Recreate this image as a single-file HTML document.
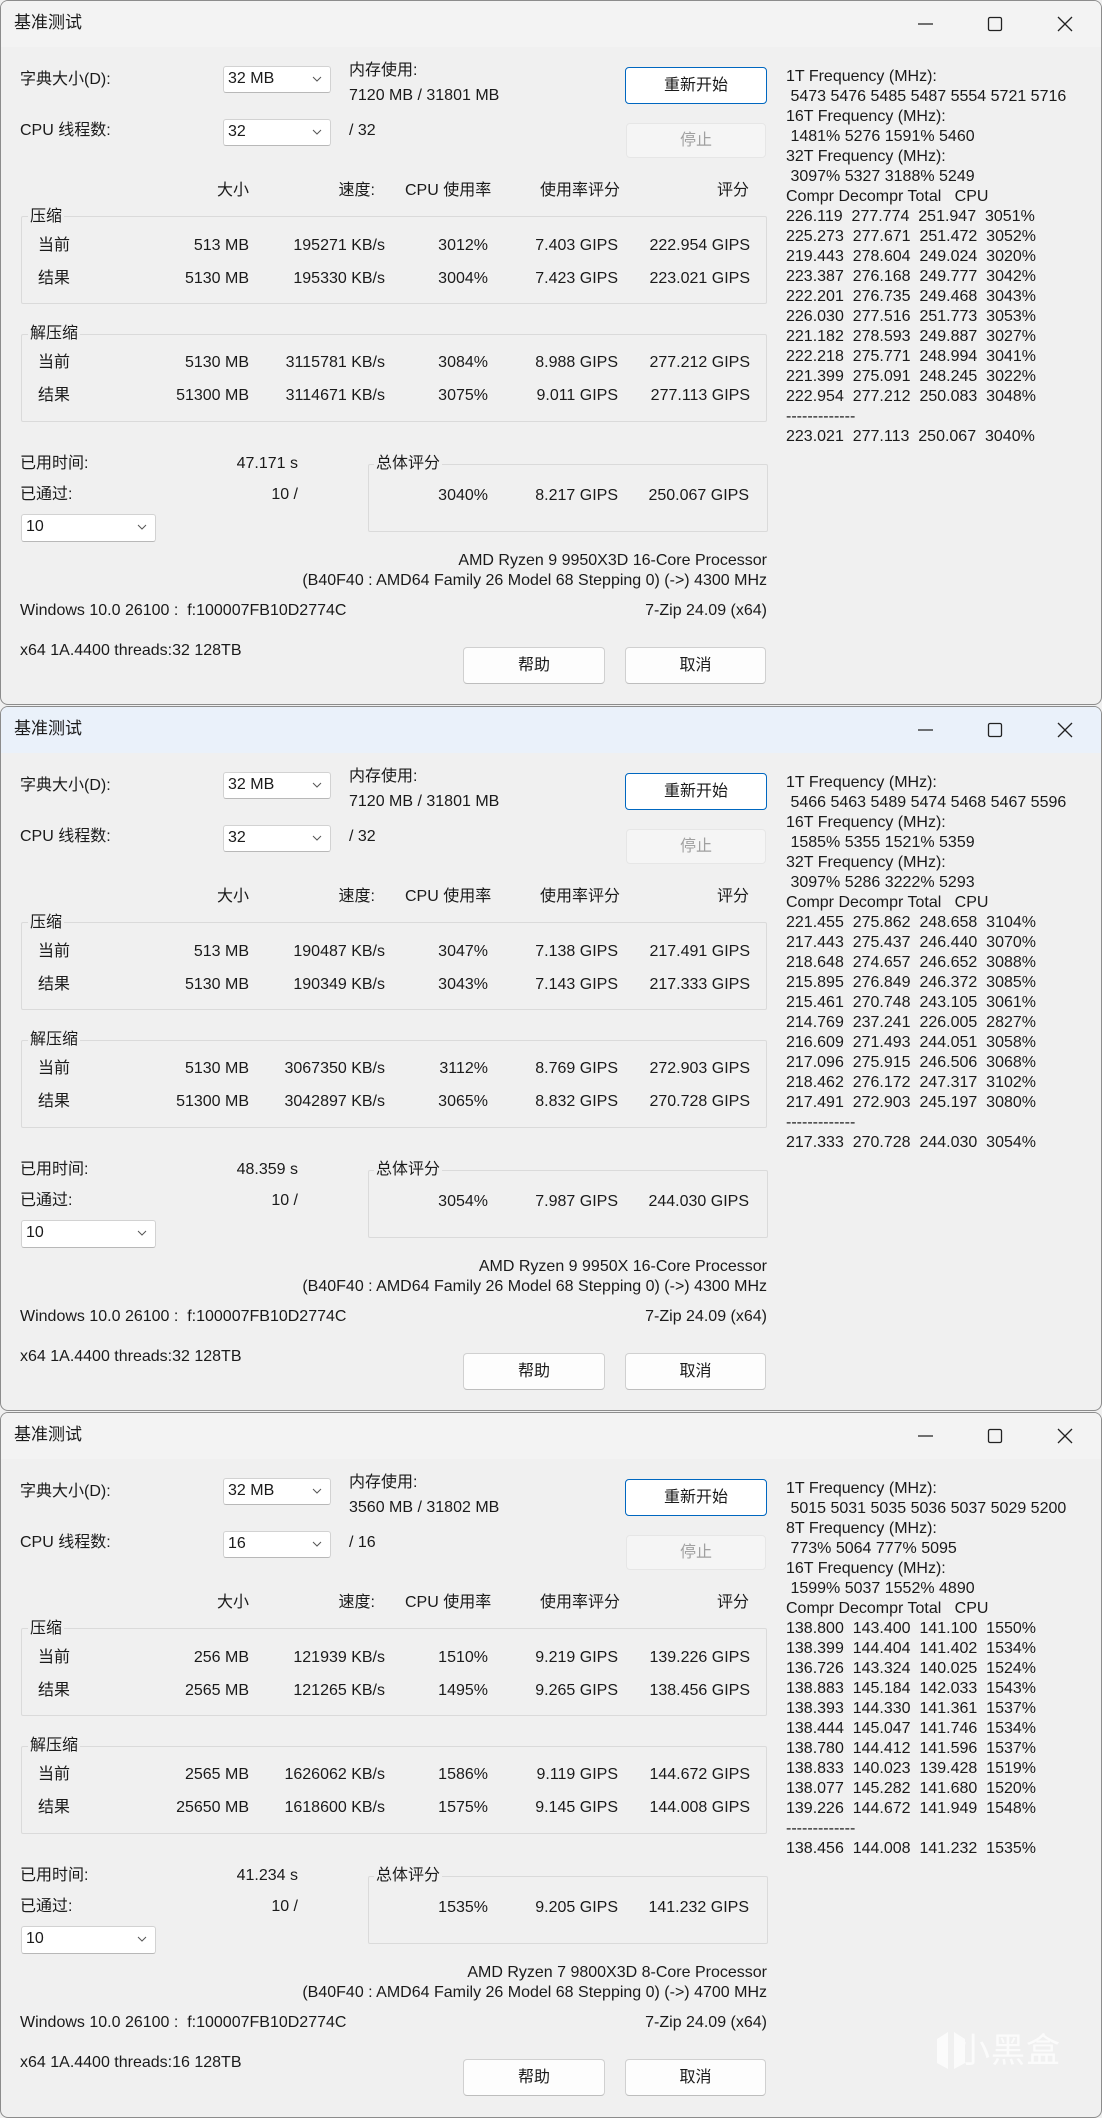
<!DOCTYPE html>
<html><head><meta charset="utf-8"><style>
*{margin:0;padding:0;box-sizing:border-box}
body{width:1102px;height:2118px;background:#f0f0f0;position:relative;overflow:hidden;font-family:"Liberation Sans","Noto Sans CJK SC",sans-serif;color:#1a1a1a}
.w{position:absolute;left:0;width:1102px;height:705px;border:1px solid #8c8c8c;border-radius:8px;background:#f0f0f0;overflow:hidden}
.tb{position:absolute;left:0;top:0;width:100%;height:46px;background:#f3f3f3}
.blue .tb{background:#eaf1fa}
.t{position:absolute;white-space:pre;line-height:20px;font-size:16px}
.r{text-align:right}
.ttl{left:13px;top:12px;font-size:17px}
.cb{position:absolute;background:#fff;border:1px solid #d2d2d2;border-bottom-color:#b8b8b8;border-radius:3px;font-size:16px;line-height:24px;padding-left:4px}
.cb svg{position:absolute;right:8px;top:9px}
.gb{position:absolute;border:1px solid #dadada;border-radius:2px}
.gl{position:absolute;background:#f0f0f0;padding:0 2px;line-height:20px;font-size:16px}
.btn{position:absolute;background:#fdfdfd;border:1px solid #d0d0d0;border-bottom-color:#bdbdbd;border-radius:4px;text-align:center;font-size:16px}
.pri{border:1px solid #0067c0;background:#fff}
.dis{background:#f5f5f5;border-color:#e6e6e6;color:#a0a0a0}
.rc{left:785px;top:66px;line-height:20px;font-size:16px}
.wm{position:absolute;left:955px;top:610px;font-size:34px;color:#fbfbfb;font-family:"Noto Sans CJK SC",sans-serif;letter-spacing:1px}
</style></head><body>

<!-- WINDOW 1 -->
<div class="w" style="top:0">
<div class="tb"></div>
<div class="t ttl">基准测试</div>
<svg style="position:absolute;left:916px;top:14px" width="160" height="18"><line x1="1" y1="9" x2="16" y2="9" stroke="#222" stroke-width="1.3"/><rect x="71.5" y="2.5" width="13" height="13" rx="1.5" fill="none" stroke="#222" stroke-width="1.3"/><path d="M141 2 L155 16 M155 2 L141 16" stroke="#222" stroke-width="1.3"/></svg>
<div class="t" style="left:19px;top:69px">字典大小(D):</div>
<div class="cb" style="left:222px;top:65px;width:108px;height:27px">32 MB<svg width="10" height="7"><path d="M1 1 L5 5 L9 1" fill="none" stroke="#555" stroke-width="1"/></svg></div>
<div class="t" style="left:348px;top:60px">内存使用:</div>
<div class="t" style="left:348px;top:85px">7120 MB / 31801 MB</div>
<div class="btn pri" style="left:624px;top:66px;width:142px;height:37px;line-height:35px">重新开始</div>
<div class="btn dis" style="left:625px;top:122px;width:140px;height:35px;line-height:33px">停止</div>
<div class="t" style="left:19px;top:120px">CPU 线程数:</div>
<div class="cb" style="left:222px;top:118px;width:108px;height:27px">32<svg width="10" height="7"><path d="M1 1 L5 5 L9 1" fill="none" stroke="#555" stroke-width="1"/></svg></div>
<div class="t" style="left:348px;top:120px">/ 32</div>
<div class="t r" style="right:852px;top:180px">大小</div>
<div class="t r" style="right:726px;top:180px">速度:</div>
<div class="t" style="left:404px;top:180px">CPU 使用率</div>
<div class="t" style="left:539px;top:180px">使用率评分</div>
<div class="t r" style="right:352px;top:180px">评分</div>
<div class="gb" style="left:20px;top:215px;width:746px;height:88px"></div>
<div class="gl" style="left:27px;top:206px">压缩</div>
<div class="t" style="left:37px;top:235px">当前</div><div class="t r" style="right:852px;top:235px">513 MB</div><div class="t r" style="right:716px;top:235px">195271 KB/s</div><div class="t r" style="right:613px;top:235px">3012%</div><div class="t r" style="right:483px;top:235px">7.403 GIPS</div><div class="t r" style="right:351px;top:235px">222.954 GIPS</div>
<div class="t" style="left:37px;top:268px">结果</div><div class="t r" style="right:852px;top:268px">5130 MB</div><div class="t r" style="right:716px;top:268px">195330 KB/s</div><div class="t r" style="right:613px;top:268px">3004%</div><div class="t r" style="right:483px;top:268px">7.423 GIPS</div><div class="t r" style="right:351px;top:268px">223.021 GIPS</div>
<div class="gb" style="left:20px;top:333px;width:746px;height:88px"></div>
<div class="gl" style="left:27px;top:323px">解压缩</div>
<div class="t" style="left:37px;top:352px">当前</div><div class="t r" style="right:852px;top:352px">5130 MB</div><div class="t r" style="right:716px;top:352px">3115781 KB/s</div><div class="t r" style="right:613px;top:352px">3084%</div><div class="t r" style="right:483px;top:352px">8.988 GIPS</div><div class="t r" style="right:351px;top:352px">277.212 GIPS</div>
<div class="t" style="left:37px;top:385px">结果</div><div class="t r" style="right:852px;top:385px">51300 MB</div><div class="t r" style="right:716px;top:385px">3114671 KB/s</div><div class="t r" style="right:613px;top:385px">3075%</div><div class="t r" style="right:483px;top:385px">9.011 GIPS</div><div class="t r" style="right:351px;top:385px">277.113 GIPS</div>
<div class="t" style="left:19px;top:453px">已用时间:</div><div class="t r" style="right:803px;top:453px">47.171 s</div>
<div class="t" style="left:19px;top:484px">已通过:</div><div class="t r" style="right:803px;top:484px">10 /</div>
<div class="cb" style="left:20px;top:513px;width:135px;height:28px">10<svg width="10" height="7"><path d="M1 1 L5 5 L9 1" fill="none" stroke="#555" stroke-width="1"/></svg></div>
<div class="gb" style="left:367px;top:463px;width:400px;height:68px"></div>
<div class="gl" style="left:373px;top:453px">总体评分</div>
<div class="t r" style="right:613px;top:485px">3040%</div><div class="t r" style="right:483px;top:485px">8.217 GIPS</div><div class="t r" style="right:352px;top:485px">250.067 GIPS</div>
<div class="t r" style="right:334px;top:550px">AMD Ryzen 9 9950X3D 16-Core Processor</div>
<div class="t r" style="right:334px;top:570px">(B40F40 : AMD64 Family 26 Model 68 Stepping 0) (-&gt;) 4300 MHz</div>
<div class="t" style="left:19px;top:600px">Windows 10.0 26100 :  f:100007FB10D2774C</div>
<div class="t r" style="right:334px;top:600px">7-Zip 24.09 (x64)</div>
<div class="t" style="left:19px;top:640px">x64 1A.4400 threads:32 128TB</div>
<div class="btn" style="left:462px;top:646px;width:142px;height:37px;line-height:35px">帮助</div>
<div class="btn" style="left:624px;top:646px;width:141px;height:37px;line-height:35px">取消</div>
<div class="t rc">1T Frequency (MHz):
 5473 5476 5485 5487 5554 5721 5716
16T Frequency (MHz):
 1481% 5276 1591% 5460
32T Frequency (MHz):
 3097% 5327 3188% 5249
Compr Decompr Total   CPU
226.119  277.774  251.947  3051%
225.273  277.671  251.472  3052%
219.443  278.604  249.024  3020%
223.387  276.168  249.777  3042%
222.201  276.735  249.468  3043%
226.030  277.516  251.773  3053%
221.182  278.593  249.887  3027%
222.218  275.771  248.994  3041%
221.399  275.091  248.245  3022%
222.954  277.212  250.083  3048%
-------------
223.021  277.113  250.067  3040%</div>
</div>

<!-- WINDOW 2 -->
<div class="w blue" style="top:706px">
<div class="tb"></div>
<div class="t ttl">基准测试</div>
<svg style="position:absolute;left:916px;top:14px" width="160" height="18"><line x1="1" y1="9" x2="16" y2="9" stroke="#222" stroke-width="1.3"/><rect x="71.5" y="2.5" width="13" height="13" rx="1.5" fill="none" stroke="#222" stroke-width="1.3"/><path d="M141 2 L155 16 M155 2 L141 16" stroke="#222" stroke-width="1.3"/></svg>
<div class="t" style="left:19px;top:69px">字典大小(D):</div>
<div class="cb" style="left:222px;top:65px;width:108px;height:27px">32 MB<svg width="10" height="7"><path d="M1 1 L5 5 L9 1" fill="none" stroke="#555" stroke-width="1"/></svg></div>
<div class="t" style="left:348px;top:60px">内存使用:</div>
<div class="t" style="left:348px;top:85px">7120 MB / 31801 MB</div>
<div class="btn pri" style="left:624px;top:66px;width:142px;height:37px;line-height:35px">重新开始</div>
<div class="btn dis" style="left:625px;top:122px;width:140px;height:35px;line-height:33px">停止</div>
<div class="t" style="left:19px;top:120px">CPU 线程数:</div>
<div class="cb" style="left:222px;top:118px;width:108px;height:27px">32<svg width="10" height="7"><path d="M1 1 L5 5 L9 1" fill="none" stroke="#555" stroke-width="1"/></svg></div>
<div class="t" style="left:348px;top:120px">/ 32</div>
<div class="t r" style="right:852px;top:180px">大小</div>
<div class="t r" style="right:726px;top:180px">速度:</div>
<div class="t" style="left:404px;top:180px">CPU 使用率</div>
<div class="t" style="left:539px;top:180px">使用率评分</div>
<div class="t r" style="right:352px;top:180px">评分</div>
<div class="gb" style="left:20px;top:215px;width:746px;height:88px"></div>
<div class="gl" style="left:27px;top:206px">压缩</div>
<div class="t" style="left:37px;top:235px">当前</div><div class="t r" style="right:852px;top:235px">513 MB</div><div class="t r" style="right:716px;top:235px">190487 KB/s</div><div class="t r" style="right:613px;top:235px">3047%</div><div class="t r" style="right:483px;top:235px">7.138 GIPS</div><div class="t r" style="right:351px;top:235px">217.491 GIPS</div>
<div class="t" style="left:37px;top:268px">结果</div><div class="t r" style="right:852px;top:268px">5130 MB</div><div class="t r" style="right:716px;top:268px">190349 KB/s</div><div class="t r" style="right:613px;top:268px">3043%</div><div class="t r" style="right:483px;top:268px">7.143 GIPS</div><div class="t r" style="right:351px;top:268px">217.333 GIPS</div>
<div class="gb" style="left:20px;top:333px;width:746px;height:88px"></div>
<div class="gl" style="left:27px;top:323px">解压缩</div>
<div class="t" style="left:37px;top:352px">当前</div><div class="t r" style="right:852px;top:352px">5130 MB</div><div class="t r" style="right:716px;top:352px">3067350 KB/s</div><div class="t r" style="right:613px;top:352px">3112%</div><div class="t r" style="right:483px;top:352px">8.769 GIPS</div><div class="t r" style="right:351px;top:352px">272.903 GIPS</div>
<div class="t" style="left:37px;top:385px">结果</div><div class="t r" style="right:852px;top:385px">51300 MB</div><div class="t r" style="right:716px;top:385px">3042897 KB/s</div><div class="t r" style="right:613px;top:385px">3065%</div><div class="t r" style="right:483px;top:385px">8.832 GIPS</div><div class="t r" style="right:351px;top:385px">270.728 GIPS</div>
<div class="t" style="left:19px;top:453px">已用时间:</div><div class="t r" style="right:803px;top:453px">48.359 s</div>
<div class="t" style="left:19px;top:484px">已通过:</div><div class="t r" style="right:803px;top:484px">10 /</div>
<div class="cb" style="left:20px;top:513px;width:135px;height:28px">10<svg width="10" height="7"><path d="M1 1 L5 5 L9 1" fill="none" stroke="#555" stroke-width="1"/></svg></div>
<div class="gb" style="left:367px;top:463px;width:400px;height:68px"></div>
<div class="gl" style="left:373px;top:453px">总体评分</div>
<div class="t r" style="right:613px;top:485px">3054%</div><div class="t r" style="right:483px;top:485px">7.987 GIPS</div><div class="t r" style="right:352px;top:485px">244.030 GIPS</div>
<div class="t r" style="right:334px;top:550px">AMD Ryzen 9 9950X 16-Core Processor</div>
<div class="t r" style="right:334px;top:570px">(B40F40 : AMD64 Family 26 Model 68 Stepping 0) (-&gt;) 4300 MHz</div>
<div class="t" style="left:19px;top:600px">Windows 10.0 26100 :  f:100007FB10D2774C</div>
<div class="t r" style="right:334px;top:600px">7-Zip 24.09 (x64)</div>
<div class="t" style="left:19px;top:640px">x64 1A.4400 threads:32 128TB</div>
<div class="btn" style="left:462px;top:646px;width:142px;height:37px;line-height:35px">帮助</div>
<div class="btn" style="left:624px;top:646px;width:141px;height:37px;line-height:35px">取消</div>
<div class="t rc">1T Frequency (MHz):
 5466 5463 5489 5474 5468 5467 5596
16T Frequency (MHz):
 1585% 5355 1521% 5359
32T Frequency (MHz):
 3097% 5286 3222% 5293
Compr Decompr Total   CPU
221.455  275.862  248.658  3104%
217.443  275.437  246.440  3070%
218.648  274.657  246.652  3088%
215.895  276.849  246.372  3085%
215.461  270.748  243.105  3061%
214.769  237.241  226.005  2827%
216.609  271.493  244.051  3058%
217.096  275.915  246.506  3068%
218.462  276.172  247.317  3102%
217.491  272.903  245.197  3080%
-------------
217.333  270.728  244.030  3054%</div>
</div>

<!-- WINDOW 3 -->
<div class="w" style="top:1412px;height:706px">
<div class="tb"></div>
<div class="t ttl">基准测试</div>
<svg style="position:absolute;left:916px;top:14px" width="160" height="18"><line x1="1" y1="9" x2="16" y2="9" stroke="#222" stroke-width="1.3"/><rect x="71.5" y="2.5" width="13" height="13" rx="1.5" fill="none" stroke="#222" stroke-width="1.3"/><path d="M141 2 L155 16 M155 2 L141 16" stroke="#222" stroke-width="1.3"/></svg>
<div class="t" style="left:19px;top:69px">字典大小(D):</div>
<div class="cb" style="left:222px;top:65px;width:108px;height:27px">32 MB<svg width="10" height="7"><path d="M1 1 L5 5 L9 1" fill="none" stroke="#555" stroke-width="1"/></svg></div>
<div class="t" style="left:348px;top:60px">内存使用:</div>
<div class="t" style="left:348px;top:85px">3560 MB / 31802 MB</div>
<div class="btn pri" style="left:624px;top:66px;width:142px;height:37px;line-height:35px">重新开始</div>
<div class="btn dis" style="left:625px;top:122px;width:140px;height:35px;line-height:33px">停止</div>
<div class="t" style="left:19px;top:120px">CPU 线程数:</div>
<div class="cb" style="left:222px;top:118px;width:108px;height:27px">16<svg width="10" height="7"><path d="M1 1 L5 5 L9 1" fill="none" stroke="#555" stroke-width="1"/></svg></div>
<div class="t" style="left:348px;top:120px">/ 16</div>
<div class="t r" style="right:852px;top:180px">大小</div>
<div class="t r" style="right:726px;top:180px">速度:</div>
<div class="t" style="left:404px;top:180px">CPU 使用率</div>
<div class="t" style="left:539px;top:180px">使用率评分</div>
<div class="t r" style="right:352px;top:180px">评分</div>
<div class="gb" style="left:20px;top:215px;width:746px;height:88px"></div>
<div class="gl" style="left:27px;top:206px">压缩</div>
<div class="t" style="left:37px;top:235px">当前</div><div class="t r" style="right:852px;top:235px">256 MB</div><div class="t r" style="right:716px;top:235px">121939 KB/s</div><div class="t r" style="right:613px;top:235px">1510%</div><div class="t r" style="right:483px;top:235px">9.219 GIPS</div><div class="t r" style="right:351px;top:235px">139.226 GIPS</div>
<div class="t" style="left:37px;top:268px">结果</div><div class="t r" style="right:852px;top:268px">2565 MB</div><div class="t r" style="right:716px;top:268px">121265 KB/s</div><div class="t r" style="right:613px;top:268px">1495%</div><div class="t r" style="right:483px;top:268px">9.265 GIPS</div><div class="t r" style="right:351px;top:268px">138.456 GIPS</div>
<div class="gb" style="left:20px;top:333px;width:746px;height:88px"></div>
<div class="gl" style="left:27px;top:323px">解压缩</div>
<div class="t" style="left:37px;top:352px">当前</div><div class="t r" style="right:852px;top:352px">2565 MB</div><div class="t r" style="right:716px;top:352px">1626062 KB/s</div><div class="t r" style="right:613px;top:352px">1586%</div><div class="t r" style="right:483px;top:352px">9.119 GIPS</div><div class="t r" style="right:351px;top:352px">144.672 GIPS</div>
<div class="t" style="left:37px;top:385px">结果</div><div class="t r" style="right:852px;top:385px">25650 MB</div><div class="t r" style="right:716px;top:385px">1618600 KB/s</div><div class="t r" style="right:613px;top:385px">1575%</div><div class="t r" style="right:483px;top:385px">9.145 GIPS</div><div class="t r" style="right:351px;top:385px">144.008 GIPS</div>
<div class="t" style="left:19px;top:453px">已用时间:</div><div class="t r" style="right:803px;top:453px">41.234 s</div>
<div class="t" style="left:19px;top:484px">已通过:</div><div class="t r" style="right:803px;top:484px">10 /</div>
<div class="cb" style="left:20px;top:513px;width:135px;height:28px">10<svg width="10" height="7"><path d="M1 1 L5 5 L9 1" fill="none" stroke="#555" stroke-width="1"/></svg></div>
<div class="gb" style="left:367px;top:463px;width:400px;height:68px"></div>
<div class="gl" style="left:373px;top:453px">总体评分</div>
<div class="t r" style="right:613px;top:485px">1535%</div><div class="t r" style="right:483px;top:485px">9.205 GIPS</div><div class="t r" style="right:352px;top:485px">141.232 GIPS</div>
<div class="t r" style="right:334px;top:550px">AMD Ryzen 7 9800X3D 8-Core Processor</div>
<div class="t r" style="right:334px;top:570px">(B40F40 : AMD64 Family 26 Model 68 Stepping 0) (-&gt;) 4700 MHz</div>
<div class="t" style="left:19px;top:600px">Windows 10.0 26100 :  f:100007FB10D2774C</div>
<div class="t r" style="right:334px;top:600px">7-Zip 24.09 (x64)</div>
<div class="t" style="left:19px;top:640px">x64 1A.4400 threads:16 128TB</div>
<div class="btn" style="left:462px;top:646px;width:142px;height:37px;line-height:35px">帮助</div>
<div class="btn" style="left:624px;top:646px;width:141px;height:37px;line-height:35px">取消</div>
<div class="t rc">1T Frequency (MHz):
 5015 5031 5035 5036 5037 5029 5200
8T Frequency (MHz):
 773% 5064 777% 5095
16T Frequency (MHz):
 1599% 5037 1552% 4890
Compr Decompr Total   CPU
138.800  143.400  141.100  1550%
138.399  144.404  141.402  1534%
136.726  143.324  140.025  1524%
138.883  145.184  142.033  1543%
138.393  144.330  141.361  1537%
138.444  145.047  141.746  1534%
138.780  144.412  141.596  1537%
138.833  140.023  139.428  1519%
138.077  145.282  141.680  1520%
139.226  144.672  141.949  1548%
-------------
138.456  144.008  141.232  1535%</div>
<div class="wm">小黑盒</div>
<svg style="position:absolute;left:933px;top:616px" width="34" height="44"><path d="M3 10 L14 3 L14 40 L3 34 Z M20 3 L31 10 L31 34 L20 40 Z" fill="#fbfbfb"/></svg>
</div>
</body></html>
